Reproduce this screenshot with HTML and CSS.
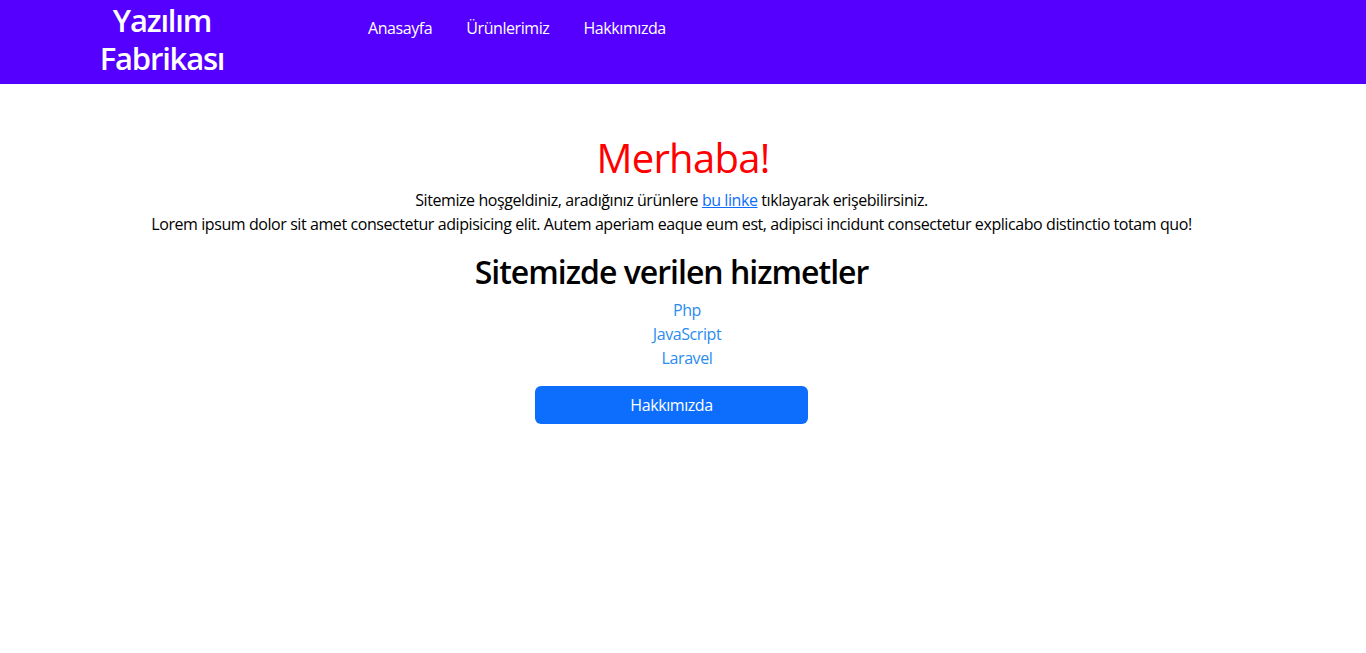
FILE: index.html
```html
<!DOCTYPE html>
<html lang="tr">
<head>
<meta charset="utf-8">
<title>Yazılım Fabrikası</title>
<link rel="stylesheet" href="styles.css">
</head>
<body>
<header class="navbar">
  <a class="brand" href="#"><span class="brand-line">Yazılım</span><span class="brand-line">Fabrikası</span></a>
  <nav class="nav">
    <a class="nav-link" href="#">Anasayfa</a>
    <a class="nav-link" href="#">Ürünlerimiz</a>
    <a class="nav-link" href="#">Hakkımızda</a>
  </nav>
</header>
<main class="main">
  <h1 class="title">Merhaba!</h1>
  <p class="lead">Sitemize hoşgeldiniz, aradığınız ürünlere <a href="#" class="inline-link">bu linke</a> tıklayarak erişebilirsiniz.<br>Lorem ipsum dolor sit amet consectetur adipisicing elit. Autem aperiam eaque eum est, adipisci incidunt consectetur explicabo distinctio totam quo!</p>
  <h2 class="subtitle">Sitemizde verilen hizmetler</h2>
  <ul class="services">
    <li><a href="#">Php</a></li>
    <li><a href="#">JavaScript</a></li>
    <li><a href="#">Laravel</a></li>
  </ul>
  <a class="btn" href="#">Hakkımızda</a>
</main>
</body>
</html>
```
FILE: styles.css
```css
* { box-sizing: border-box; }
body {
  margin: 0;
  font-family: "Open Sans", "Noto Sans", sans-serif;
  font-size: 16px;
  line-height: 24px;
  letter-spacing: -0.42px;
  color: #000;
  background: #fff;
}
a { text-decoration: none; }
.navbar {
  background: #5500ff;
  height: 84px;
  display: flex;
  align-items: flex-start;
}
.brand {
  width: 324px;
  display: flex;
  flex-direction: column;
  align-items: center;
  color: #fff;
  font-weight: 600;
  font-size: 31px;
  line-height: 38px;
  letter-spacing: -1.2px;
  padding-top: 1px;
}
.nav {
  display: flex;
  gap: 34px;
  padding-left: 44px;
  padding-top: 16px;
}
.nav-link {
  color: #fff;
}
.main {
  display: flex;
  flex-direction: column;
  align-items: center;
  padding-top: 50px;
}
.title {
  margin: 0 0 6px;
  font-size: 40px;
  line-height: 48px;
  font-weight: 500;
  letter-spacing: -0.7px;
  color: #ff0000;
}
.lead {
  margin: 0 23px 0 0;
  text-align: center;
}
.inline-link {
  color: #0d6efd;
  text-decoration: underline;
}
.subtitle {
  margin: 16px 23px 0 0;
  font-size: 32px;
  line-height: 40px;
  font-weight: 600;
  letter-spacing: -1px;
}
.services {
  list-style: none;
  margin: 6px 0 0;
  padding: 0 0 0 8px;
  text-align: center;
}
.services a { color: #2b8cf0; }
.btn {
  margin-top: 16px;
  margin-right: 23px;
  width: 273px;
  height: 38px;
  border-radius: 6px;
  background: #0d6efd;
  color: #fff;
  display: flex;
  align-items: center;
  justify-content: center;
}
```
